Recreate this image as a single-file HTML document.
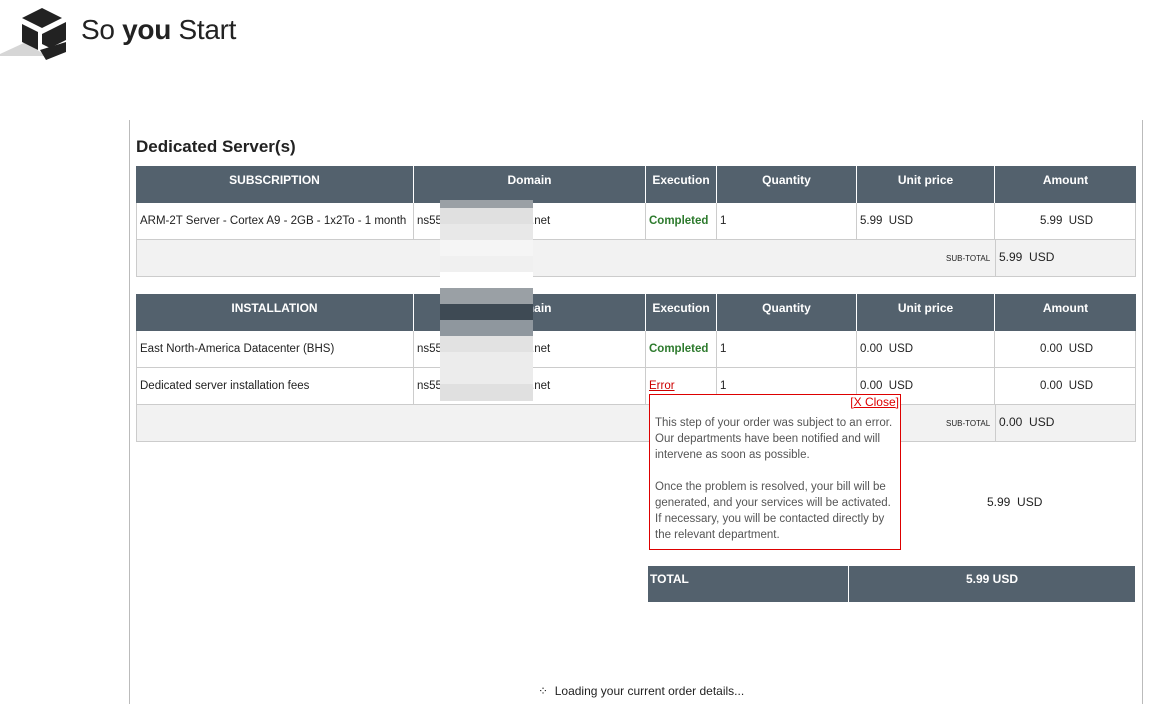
<!DOCTYPE html>
<html><head><meta charset="utf-8"><style>
body{margin:0;width:1162px;height:704px;background:#fff;font-family:"Liberation Sans",sans-serif;position:relative;overflow:hidden;color:#222}
.a{position:absolute}
.h{background:#53616d;color:#fff;font-weight:bold;font-size:12px;text-align:center;box-sizing:border-box;padding-top:7px;border-right:1px solid #fff;height:37px}
.c{font-size:11.5px;box-sizing:border-box;border-right:1px solid #ccc;border-bottom:1px solid #ccc;height:37px;line-height:37px;padding-left:3px;white-space:nowrap;overflow:hidden;position:relative}
.g{color:#2d7a2d;font-weight:bold}
.sub{background:#f2f2f2;border:1px solid #ccc;box-sizing:border-box;height:38px}
.n{position:absolute;left:117px;top:0}
</style></head><body>
<svg class="a" style="left:0;top:6px" width="70" height="54" viewBox="0 0 70 54">
<polygon points="0,48 26,36 46,50 0,50" fill="#d6d6d6"/>
<polygon points="42,2 62,12 42,22 22,12" fill="#222"/>
<polygon points="22,18 38,26 38,44 22,36" fill="#222"/>
<polygon points="42,28 66,16 66,34 50,42 42,38" fill="#222"/>
<polygon points="40,44 66,36 66,46 46,54" fill="#222"/>
</svg>
<div class="a" style="left:81px;top:14px;font-size:28px;color:#222;letter-spacing:-0.3px">So <b>you</b> Start</div>
<div class="a" style="left:129px;top:120px;width:1px;height:584px;background:#bbb"></div>
<div class="a" style="left:1142px;top:120px;width:1px;height:584px;background:#bbb"></div>
<div class="a" style="left:136px;top:137px;font-size:17px;font-weight:bold">Dedicated Server(s)</div>

<div class="a" style="left:136px;top:166px;width:1000px;display:flex">
<div class="h" style="width:278px">SUBSCRIPTION</div><div class="h" style="width:232px">Domain</div><div class="h" style="width:71px">Execution</div><div class="h" style="width:140px">Quantity</div><div class="h" style="width:138px">Unit price</div><div class="h" style="width:141px;border:none">Amount</div></div>
<div class="a" style="left:136px;top:203px;width:1000px;display:flex;border-left:1px solid #ccc">
<div class="c" style="width:277px">ARM-2T Server - Cortex A9 - 2GB - 1x2To - 1 month</div><div class="c" style="width:232px">ns55<span class="n">.net</span></div><div class="c g" style="width:71px">Completed</div><div class="c" style="width:140px">1</div><div class="c" style="width:138px">5.99 &nbsp;USD</div><div class="c" style="width:141px;text-align:center">5.99 &nbsp;USD</div></div>
<div class="a sub" style="left:136px;top:239px;width:1000px"></div>
<div class="a" style="left:946px;top:254px;font-size:8px">SUB-TOTAL</div>
<div class="a" style="left:995px;top:239px;width:1px;height:38px;background:#ccc"></div>
<div class="a" style="left:999px;top:250px;font-size:12px">5.99 &nbsp;USD</div>

<div class="a" style="left:136px;top:294px;width:1000px;display:flex">
<div class="h" style="width:278px">INSTALLATION</div><div class="h" style="width:232px">Domain</div><div class="h" style="width:71px">Execution</div><div class="h" style="width:140px">Quantity</div><div class="h" style="width:138px">Unit price</div><div class="h" style="width:141px;border:none">Amount</div></div>
<div class="a" style="left:136px;top:331px;width:1000px;display:flex;border-left:1px solid #ccc">
<div class="c" style="width:277px">East North-America Datacenter (BHS)</div><div class="c" style="width:232px">ns55<span class="n">.net</span></div><div class="c g" style="width:71px">Completed</div><div class="c" style="width:140px">1</div><div class="c" style="width:138px">0.00 &nbsp;USD</div><div class="c" style="width:141px;text-align:center">0.00 &nbsp;USD</div></div>
<div class="a" style="left:136px;top:368px;width:1000px;display:flex;border-left:1px solid #ccc">
<div class="c" style="width:277px">Dedicated server installation fees</div><div class="c" style="width:232px">ns55<span class="n">.net</span></div><div class="c" style="width:71px;color:#c00;text-decoration:underline">Error</div><div class="c" style="width:140px">1</div><div class="c" style="width:138px">0.00 &nbsp;USD</div><div class="c" style="width:141px;text-align:center">0.00 &nbsp;USD</div></div>
<div class="a sub" style="left:136px;top:404px;width:1000px"></div>
<div class="a" style="left:946px;top:419px;font-size:8px">SUB-TOTAL</div>
<div class="a" style="left:995px;top:404px;width:1px;height:38px;background:#ccc"></div>
<div class="a" style="left:999px;top:415px;font-size:12px">0.00 &nbsp;USD</div>

<div class="a" style="left:440px;top:200px;width:93px">
<div style="height:8px;background:#9aa0a5"></div><div style="height:16px;background:#e0e0e0"></div><div style="height:16px;background:#e8e8e8"></div><div style="height:16px;background:#f5f5f5"></div><div style="height:16px;background:#f0f0f0"></div><div style="height:16px;background:#fff"></div><div style="height:16px;background:#9aa0a5"></div><div style="height:16px;background:#3e4a54"></div><div style="height:16px;background:#8f979e"></div><div style="height:16px;background:#e2e2e2"></div><div style="height:16px;background:#ececec"></div><div style="height:16px;background:#ececec"></div><div style="height:17px;background:#e0e0e0"></div></div>

<div class="a" style="left:987px;top:495px;font-size:12px">5.99 &nbsp;USD</div>
<div class="a" style="left:648px;top:566px;width:487px;height:36px;display:flex;color:#fff;font-weight:bold;font-size:12px">
<div style="width:201px;background:#53616d;border-right:1px solid #fff;padding:6px 2px;box-sizing:border-box">TOTAL</div>
<div style="flex:1;background:#53616d;text-align:center;padding-top:6px">5.99 USD</div></div>

<div class="a" style="left:649px;top:394px;width:252px;height:156px;border:1px solid #d00;box-sizing:border-box;background:#fff;font-size:11.5px;color:#555;line-height:16px;padding:20px 5px 0 5px">
<div class="a" style="right:1px;top:0;color:#d00;font-size:12px;line-height:14px">[<u>X Close</u>]</div>
This step of your order was subject to an error. Our departments have been notified and will intervene as soon as possible.<br><br>Once the problem is resolved, your bill will be generated, and your services will be activated. If necessary, you will be contacted directly by the relevant department.</div>

<div class="a" style="left:538px;top:684px;font-size:12px">⁘ &nbsp;Loading your current order details...</div>
</body></html>
